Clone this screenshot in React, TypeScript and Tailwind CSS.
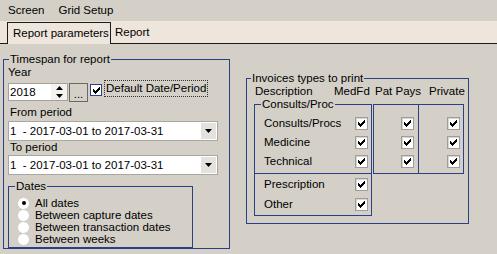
import React from 'react';

function Tick() {
  return (
    <svg width="7" height="7" viewBox="0 0 7 7" shapeRendering="crispEdges">
      <path
        d="M6 0h1v3h-1zM5 1h1v3h-1zM4 2h1v3h-1zM3 3h1v3h-1zM2 4h1v3h-1zM1 3h1v3h-1zM0 2h1v3h-1z"
        fill="#000"
      />
    </svg>
  );
}

function CheckBox({ focus }: { focus?: boolean }) {
  return (
    <span
      className={
        focus
          ? 'flex h-[12px] w-[12px] shrink-0 items-center justify-center border border-[#2b4186] bg-white'
          : 'flex h-[13px] w-[13px] shrink-0 items-center justify-center border border-[#a09d98] bg-white shadow-[inset_1px_1px_0_#d8d6d2]'
      }
    >
      <Tick />
    </span>
  );
}

function Radio({ checked, label }: { checked?: boolean; label: string }) {
  return (
    <div className="flex h-[12px] items-center">
      <span className="flex h-[13px] w-[13px] shrink-0 items-center justify-center rounded-full border border-[#cfccc6] bg-white">
        {checked && <span className="h-[4px] w-[4px] rounded-full bg-black" />}
      </span>
      <span className="ml-[5px] leading-[12px]">{label}</span>
    </div>
  );
}

function Combo({ value }: { value: string }) {
  return (
    <div className="flex h-[20px] w-[210px] items-stretch border border-[#aaa7a1] bg-white">
      <span className="flex-1 pl-[1px] leading-[18px] whitespace-pre">{value}</span>
      <span className="my-[1px] mr-[1px] flex w-[15px] items-center justify-center bg-[#e4e2de]">
        <svg width="7" height="4" viewBox="0 0 7 4">
          <path d="M0 0h7L3.5 4z" fill="#000" />
        </svg>
      </span>
    </div>
  );
}

function Row({ label, h }: { label: string; h: string }) {
  return (
    <div className={`flex items-center ${h}`}>
      <span className="flex-1">{label}</span>
      <CheckBox />
    </div>
  );
}

export default function App() {
  return (
    <div className="h-[254px] w-[497px] overflow-hidden bg-[#d4d0c8] font-['Liberation_Sans',Arial,sans-serif] text-[11.5px] leading-[13px] text-black">
      {/* menu */}
      <div className="flex h-[21px] items-center pl-[8px]">
        <span>Screen</span>
        <span className="ml-[14px]">Grid Setup</span>
      </div>

      {/* tabs */}
      <div className="flex h-[23px] items-end border-b border-[#1c1c1c] bg-[#eee5dc] pl-[7px]">
        <div className="-mb-px flex h-[22px] w-[104px] items-center border border-b-0 border-[#1c1c1c] bg-[#eee5dc] pl-[5px]">
          Report parameters
        </div>
        <div className="flex h-[21px] items-center pl-[4px]">Report</div>
      </div>

      <div className="flex items-start">
        {/* left group */}
        <fieldset className="ml-[3px] mt-[9px] h-[196px] w-[227px] border border-[#2b4186] pl-[4px]">
          <legend className="ml-[1px] px-[1px]">Timespan for report</legend>
          <div className="h-[13px]">Year</div>

          <div className="mt-[4px] flex h-[18px] items-start">
            <div className="flex h-[18px] w-[60px] items-stretch border border-[#a5a29c] bg-white">
              <span className="flex-1 pl-[1px] leading-[16px]">2018</span>
              <span className="flex w-[16px] flex-col items-center justify-center gap-[4px] bg-[#f4f3f1]">
                <svg width="7" height="4" viewBox="0 0 7 4">
                  <path d="M0 4h7L3.5 0z" fill="#000" />
                </svg>
                <svg width="7" height="4" viewBox="0 0 7 4">
                  <path d="M0 0h7L3.5 4z" fill="#000" />
                </svg>
              </span>
            </div>
            <div className="ml-[1px] flex h-[19px] w-[19px] items-end justify-center border border-[#6a6864] bg-[#d4d0c8] pb-[2px] leading-[10px]">
              ...
            </div>
            <div className="ml-[2px] mt-[1px]">
              <CheckBox focus />
            </div>
            <div className="-mt-[3px] ml-[2px] flex h-[17px] items-center border border-dotted border-[#333] px-[1px]">
              Default Date/Period
            </div>
          </div>

          <div className="mt-[5px] h-[13px] pl-[2px]">From period</div>
          <div className="mt-[2px]">
            <Combo value="1  - 2017-03-01 to 2017-03-31" />
          </div>
          <div className="h-[13px] pl-[2px]">To period</div>
          <div className="mt-[1px]">
            <Combo value="1  - 2017-03-01 to 2017-03-31" />
          </div>

          <fieldset className="mt-[5px] h-[68px] w-[185px] border border-[#2b4186] pl-[8px]">
            <legend className="-ml-[2px] px-[1px]">Dates</legend>
            <div className="mt-[4px]">
              <Radio checked label="All dates" />
              <Radio label="Between capture dates" />
              <Radio label="Between transaction dates" />
              <Radio label="Between weeks" />
            </div>
          </fieldset>
        </fieldset>

        {/* right group */}
        <fieldset className="ml-[16px] mt-[28px] h-[152px] w-[223px] border border-[#2b4186] pl-[7px]">
          <legend className="-ml-[3px] px-[1px]">Invoices types to print</legend>
          <div className="flex h-[13px]">
            <span className="w-[80px] pl-[1px]">Description</span>
            <span className="w-[41px]">MedFd</span>
            <span className="w-[54px]">Pat Pays</span>
            <span>Private</span>
          </div>

          <div className="flex items-start">
            <div className="w-[118px]">
              <fieldset className="h-[76px] w-[118px] border border-[#2b4186] pl-[9px] pr-[3px]">
                <legend className="-ml-[3px] px-[1px]">Consults/Proc</legend>
                <div className="mt-[3px]">
                  <Row label="Consults/Procs" h="h-[19px]" />
                  <Row label="Medicine" h="h-[19px]" />
                  <Row label="Technical" h="h-[19px]" />
                </div>
              </fieldset>
              <div className="h-[42px] border border-t-0 border-[#2b4186] pl-[9px] pr-[3px]">
                <Row label="Prescription" h="h-[20px]" />
                <Row label="Other" h="h-[20px]" />
              </div>
            </div>

            <div className="ml-[1px] mt-[6px] flex h-[70px] w-[46px] flex-col items-end border border-[#2b4186] pr-[4px] pt-[9px]">
              <div className="flex h-[19px] items-center"><CheckBox /></div>
              <div className="flex h-[19px] items-center"><CheckBox /></div>
              <div className="flex h-[19px] items-center"><CheckBox /></div>
            </div>
            <div className="mt-[6px] flex h-[70px] w-[45px] flex-col items-end border border-l-0 border-[#2b4186] pr-[3px] pt-[9px]">
              <div className="flex h-[19px] items-center"><CheckBox /></div>
              <div className="flex h-[19px] items-center"><CheckBox /></div>
              <div className="flex h-[19px] items-center"><CheckBox /></div>
            </div>
          </div>
        </fieldset>
      </div>
    </div>
  );
}
